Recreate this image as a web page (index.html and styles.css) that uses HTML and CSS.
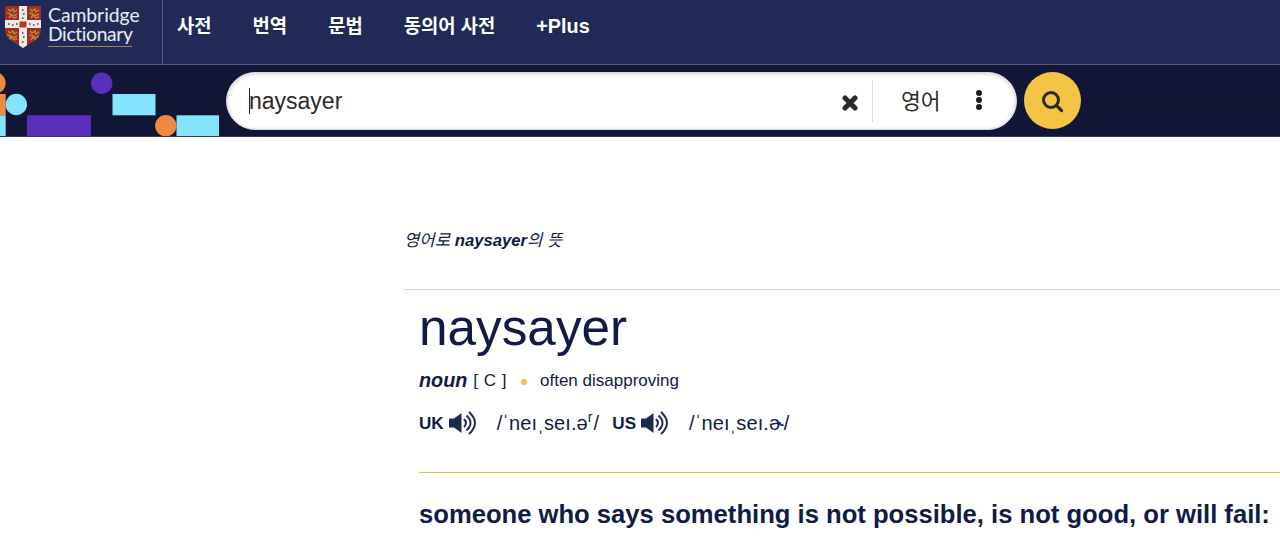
FILE: index.html
```html
<!DOCTYPE html>
<html lang="ko">
<head>
    <meta charset="UTF-8">
    <meta name="viewport" content="width=device-width, initial-scale=1.0">
    <title>naysayer | Cambridge Dictionary</title>
    <link rel="stylesheet" href="styles.css">
</head>
<body>
    <header class="top-bar">
        <a class="logo" href="#">
            <svg class="shield" viewBox="0 0 36 42" width="36" height="42">
                <defs>
                    <clipPath id="shield-shape">
                        <path d="M0 0H36V24C36 33 27 36 18 42C9 36 0 33 0 24Z"/>
                    </clipPath>
                </defs>
                <g clip-path="url(#shield-shape)">
                    <rect width="36" height="42" fill="#9e2c2a"/>
                    <!-- lions -->
                    <g fill="none" stroke="#b98a2c" stroke-width="1.5">
                        <path id="lion" d="M3 3l2 2 3-2 1 3 3-2M2 7l4 1 2 2 4-2M4 12l2-3 3 3 3-1"/>
                        <use href="#lion" x="22"/>
                        <use href="#lion" y="22"/>
                        <use href="#lion" x="22" y="22"/>
                    </g>
                    <path d="M14 0h8v14h14v8H22v20h-8V22H0v-8h14z" fill="#efe9e6"/>
                    <g fill="#6b6568">
                        <path d="M17 3h1.500v2H17zM18 7h1.500v2H18zM17 11h1.500v2H17zM17 26h1.500v2H17zM18 30h1.500v2H18zM17 35h1.500v2H17z"/>
                        <path d="M3 17h1.500v2H3zM7 18h1.500v2H7zM11 17h1.500v2H11zM24 17h1.500v2H24zM28 18h1.500v2H28zM32 17h1.500v2H32z"/>
                    </g>
                    <rect x="14.500" y="15.500" width="7" height="6" fill="#b5382c"/>
                </g>
            </svg>
            <span class="logo-text">
                <span class="word-top">Cambridge</span>
                <span class="word-bottom">Dictionary</span>
            </span>
        </a>
        <nav class="menu">
            <a href="#">사전</a>
            <a href="#">번역</a>
            <a href="#">문법</a>
            <a href="#">동의어 사전</a>
            <a class="plus" href="#">+Plus</a>
        </nav>
    </header>

    <div class="search-bar">
        <svg class="pattern" viewBox="0 0 219 71" width="219" height="71">
            <g fill="#f0883e">
                <circle cx="-5" cy="18" r="10.700"/>
                <rect x="0" y="29" width="5.700" height="21.300"/>
                <circle cx="165.800" cy="60.700" r="10.700"/>
            </g>
            <g fill="#84e3ff">
                <rect x="0" y="50.300" width="5.700" height="21"/>
                <circle cx="16.300" cy="39.500" r="10.700"/>
                <rect x="112.500" y="29" width="43" height="21.300"/>
                <rect x="176.500" y="50.300" width="42.500" height="21"/>
            </g>
            <g fill="#5a2fb9">
                <rect x="27" y="50.300" width="64" height="21"/>
                <circle cx="101.700" cy="18.300" r="10.700"/>
            </g>
        </svg>
        <form class="search-form">
            <div class="search-box">
                <span class="caret"></span>
                <span class="query">naysayer</span>
                <svg class="clear" viewBox="0 0 16 16" width="16" height="16">
                    <path d="M3 3l10 10M13 3L3 13" stroke="#292929" stroke-width="5" stroke-linecap="round"/>
                </svg>
                <div class="language">
                    <span>영어</span>
                    <svg viewBox="0 0 6 20" width="6" height="20" fill="#1d1d1d">
                        <circle cx="3" cy="3" r="3"/>
                        <circle cx="3" cy="10" r="3"/>
                        <circle cx="3" cy="17" r="3"/>
                    </svg>
                </div>
            </div>
            <button class="search-btn" type="button" aria-label="Search">
                <svg viewBox="0 0 22 22" width="22" height="22" fill="none" stroke="#292929" stroke-linecap="round">
                    <circle cx="9" cy="9" r="7.500" stroke-width="3"/>
                    <path d="M14.800 14.800l4.800 4.800" stroke-width="3.200"/>
                </svg>
            </button>
        </form>
    </div>

    <main class="entry">
        <p class="intro">영어로 <b>naysayer</b>의 뜻</p>
        <section class="entry-body">
            <h1>naysayer</h1>
            <div class="grammar">
                <span class="pos">noun</span>
                <span class="code">[ C ]</span>
                <span class="dot"></span>
                <span class="usage">often disapproving</span>
            </div>
            <div class="pron">
                <b>UK</b>
                <svg class="speaker" viewBox="0 0 28 24" width="28" height="24">
                    <path d="M0 7.500h5L12.500 2v20L5 16.500H0z" fill="#1d2a57"/>
                    <path d="M15 8q4 4 0 8M17.500 4.500q8 7.500 0 15M20 1q12 11 0 22" fill="none" stroke="#1d2a57" stroke-width="2"/>
                </svg>
                <span class="ipa ipa-uk">/ˈneıˌseı.ə<sup>r</sup>/</span>
                <b>US</b>
                <svg class="speaker" viewBox="0 0 28 24" width="28" height="24">
                    <path d="M0 7.500h5L12.500 2v20L5 16.500H0z" fill="#1d2a57"/>
                    <path d="M15 8q4 4 0 8M17.500 4.500q8 7.500 0 15M20 1q12 11 0 22" fill="none" stroke="#1d2a57" stroke-width="2"/>
                </svg>
                <span class="ipa">/ˈneıˌseı.ɚ/</span>
            </div>
            <h2 class="definition">someone who says something is not possible, is not good, or will fail:</h2>
        </section>
    </main>
</body>
</html>
```
FILE: styles.css
```css
* {
    box-sizing: border-box;
}

body {
    margin: 0;
    background-color: #fff;
    color: #111c45;
    font-family: "Liberation Sans", "Noto Sans CJK KR", sans-serif;
    overflow: hidden;
}

a {
    color: inherit;
    text-decoration: none;
}

/* Top bar */
.top-bar {
    display: flex;
    height: 65px;
    background-color: #212a56;
    border-bottom: 1px solid #555c80;
    color: #fff;
}

.logo {
    display: flex;
    width: 163px;
    padding: 6px 0 0 5px;
    border-right: 1px solid #555c80;
}

.logo-text {
    display: flex;
    flex-direction: column;
    width: 93px;
    height: 41px;
    margin-left: 7px;
    font-family: Lato, sans-serif;
    font-size: 19.3px;
    font-variant-ligatures: none;
    line-height: 19px;
    color: #e9ecf5;
}

.word-top {
    margin-top: -1px;
}

.word-bottom {
    width: 84px;
    height: 23px;
    border-bottom: 1px solid #9a8648;
    letter-spacing: -0.35px;
}

.menu {
    display: flex;
    gap: 41px;
    padding: 12px 0 0 14px;
    font-size: 18.8px;
    font-weight: bold;
    line-height: 30px;
    white-space: nowrap;
}

.plus {
    margin-top: -1px;
    font-size: 19.8px;
}

/* Search */
.search-bar {
    display: flex;
    height: 72px;
    background-color: #111636;
    border-bottom: 1px solid #34395a;
}

.pattern {
    flex: none;
}

.search-form {
    display: flex;
    gap: 7px;
    padding: 7px 0 0 7px;
}

.search-box {
    display: flex;
    align-items: center;
    width: 791px;
    height: 58px;
    padding-left: 22px;
    border: 1px solid #d4d5dd;
    border-radius: 29px;
    background-color: #fff;
    box-shadow: inset 0 1px 4px rgba(0, 0, 0, 0.2);
    color: #2b2b2b;
}

.caret {
    width: 1px;
    height: 26px;
    margin-right: -1px;
    background-color: #222;
}

.query {
    flex: 1;
    font-size: 23px;
}

.clear {
    margin: 3px 14px 0 0;
}

.language {
    display: flex;
    align-items: center;
    justify-content: space-between;
    width: 144px;
    height: 42px;
    padding: 0 34px 2px 28px;
    border-left: 1px solid #dcdde3;
    font-size: 21.5px;
    line-height: 30px;
}

.language span {
    margin-top: 3px;
}

.search-btn {
    display: flex;
    align-items: center;
    justify-content: center;
    width: 57px;
    height: 57px;
    padding: 2px 0 0;
    border: none;
    border-radius: 50%;
    background-color: #f4c544;
}

/* Entry */
.entry {
    padding: 91px 0 0 404px;
    white-space: nowrap;
}

.intro {
    height: 62px;
    margin: 0;
    border-bottom: 1px solid #d5d5d5;
    font-size: 16.7px;
    font-style: italic;
    line-height: 26px;
}

.entry-body {
    padding-left: 15px;
}

h1 {
    margin: 8px 0 0;
    font-size: 51.3px;
    font-weight: normal;
    line-height: 60px;
}

.grammar {
    display: flex;
    align-items: center;
    height: 24px;
    margin-top: 11px;
    font-size: 17px;
}

.pos {
    margin-top: -1px;
    font-size: 19.8px;
    font-style: italic;
    font-weight: bold;
}

.code {
    margin: -1px 0 0 6px;
    letter-spacing: 0.5px;
}

.dot {
    width: 6px;
    height: 6px;
    margin: 1px 13px 0 14px;
    border-radius: 50%;
    background-color: #f4c544;
}

.pron {
    display: flex;
    align-items: center;
    height: 30px;
    margin-top: 15px;
    font-size: 17.1px;
}

.pron b {
    margin-top: 2px;
}

.speaker {
    margin: -1px 20px 0 5px;
}

.ipa {
    font-size: 20px;
    letter-spacing: 0.1px;
}

.ipa-uk {
    margin-right: 13px;
}

.ipa sup {
    margin-right: 1px;
    font-size: 14px;
    line-height: 0;
}

.definition {
    margin: 34px 0 0;
    padding-top: 25px;
    border-top: 1px solid #f4b92a;
    font-size: 25.62px;
    line-height: 32px;
}
```
